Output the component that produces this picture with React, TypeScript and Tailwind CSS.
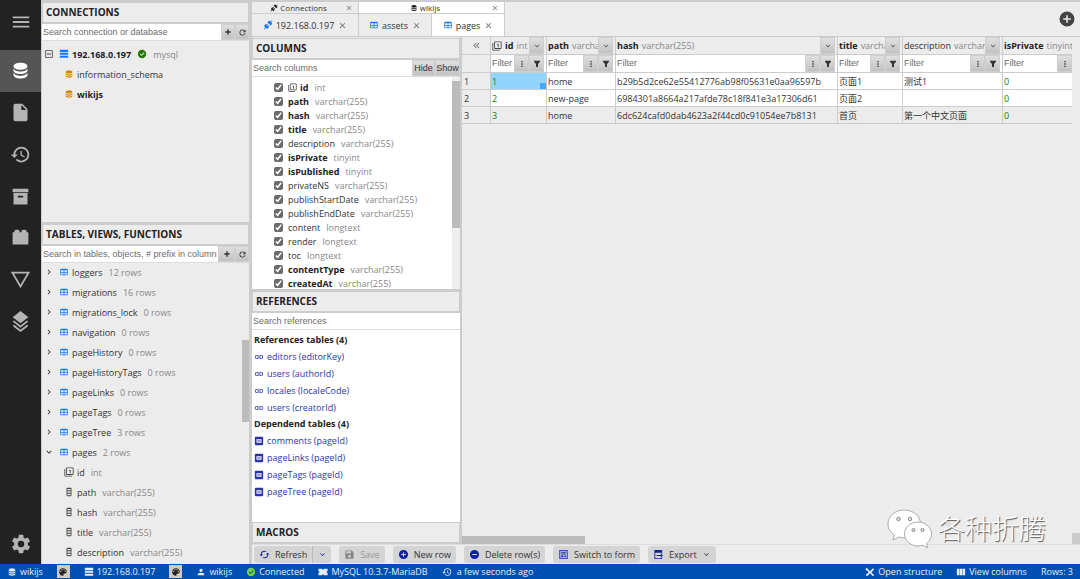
import { useState } from "react";
import type { ReactNode } from "react";
import { clsx } from "clsx";

const icons = {
  menu: "M3,6H21V8H3V6M3,11H21V13H3V11M3,16H21V18H3V16Z",
  database:
    "M12,3C7.58,3 4,4.79 4,7C4,9.21 7.58,11 12,11C16.42,11 20,9.21 20,7C20,4.79 16.42,3 12,3M4,9V12C4,14.21 7.58,16 12,16C16.42,16 20,14.21 20,12V9C20,11.21 16.42,13 12,13C7.58,13 4,11.21 4,9M4,14V17C4,19.21 7.58,21 12,21C16.42,21 20,19.21 20,17V14C20,16.21 16.42,18 12,18C7.58,18 4,16.21 4,14Z",
  file: "M13,9V3.5L18.5,9M6,2C4.89,2 4,2.89 4,4V20A2,2 0 0,0 6,22H18A2,2 0 0,0 20,20V8L14,2H6Z",
  history:
    "M13.5,8H12V13L16.28,15.54L17,14.33L13.5,12.25V8M13,3A9,9 0 0,0 4,12H1L4.96,16.03L9,12H6A7,7 0 0,1 13,5A7,7 0 0,1 20,12A7,7 0 0,1 13,19C11.07,19 9.32,18.21 8.06,16.94L6.64,18.36C8.27,20 10.5,21 13,21A9,9 0 0,0 22,12A9,9 0 0,0 13,3",
  archive:
    "M3,3H21V7H3V3M4,8H20V21H4V8M9.5,11A0.5,0.5 0 0,0 9,11.5V13H15V11.5A0.5,0.5 0 0,0 14.5,11H9.5Z",
  plugin:
    "M19,6V5A2,2 0 0,0 17,3H15A2,2 0 0,0 13,5V6H11V5A2,2 0 0,0 9,3H7A2,2 0 0,0 5,5V6H3V20H21V6H19Z",
  triangle: "M1,3H23L12,22M12,18L19.53,5H4.47",
  layers:
    "M12 0L3 7L4.63 8.27L12 14L19.36 8.27L21 7L12 0M19.37 10.73L12 16.47L4.62 10.74L3 12L12 19L21 12L19.37 10.73M19.37 15.73L12 21.47L4.62 15.74L3 17L12 24L21 17L19.37 15.73Z",
  cog: "M12,15.5A3.5,3.5 0 0,1 8.5,12A3.5,3.5 0 0,1 12,8.5A3.5,3.5 0 0,1 15.5,12A3.5,3.5 0 0,1 12,15.5M19.43,12.97C19.47,12.65 19.5,12.33 19.5,12C19.5,11.67 19.47,11.34 19.43,11L21.54,9.37C21.73,9.22 21.78,8.95 21.66,8.73L19.66,5.27C19.54,5.05 19.27,4.96 19.05,5.05L16.56,6.05C16.04,5.66 15.5,5.32 14.87,5.07L14.5,2.42C14.46,2.18 14.25,2 14,2H10C9.75,2 9.54,2.18 9.5,2.42L9.13,5.07C8.5,5.32 7.96,5.66 7.44,6.05L4.95,5.05C4.73,4.96 4.46,5.05 4.34,5.27L2.34,8.73C2.21,8.95 2.27,9.22 2.46,9.37L4.57,11C4.53,11.34 4.5,11.67 4.5,12C4.5,12.33 4.53,12.65 4.57,12.97L2.46,14.63C2.27,14.78 2.21,15.05 2.34,15.27L4.34,18.73C4.46,18.95 4.73,19.03 4.95,18.95L7.44,17.94C7.96,18.34 8.5,18.68 9.13,18.93L9.5,21.58C9.54,21.82 9.75,22 10,22H14C14.25,22 14.46,21.82 14.5,21.58L14.87,18.93C15.5,18.67 16.04,18.34 16.56,17.94L19.05,18.95C19.27,19.03 19.54,18.95 19.66,18.73L21.66,15.27C21.78,15.05 21.73,14.78 21.54,14.63L19.43,12.97Z",
  plusCircle:
    "M17,13H13V17H11V13H7V11H11V7H13V11H17M12,2A10,10 0 0,0 2,12A10,10 0 0,0 12,22A10,10 0 0,0 22,12A10,10 0 0,0 12,2Z",
  minusCircle:
    "M17,13H7V11H17M12,2A10,10 0 0,0 2,12A10,10 0 0,0 12,22A10,10 0 0,0 22,12A10,10 0 0,0 12,2Z",
  checkCircle:
    "M12,2A10,10 0 0,1 22,12A10,10 0 0,1 12,22A10,10 0 0,1 2,12A10,10 0 0,1 12,2M11,16.5L18,9.5L16.59,8.09L11,13.67L7.91,10.59L6.5,12L11,16.5Z",
  table:
    "M5,4H19A2,2 0 0,1 21,6V18A2,2 0 0,1 19,20H5A2,2 0 0,1 3,18V6A2,2 0 0,1 5,4M5,8V12H11V8H5M13,8V12H19V8H13M5,14V18H11V14H5M13,14V18H19V14H13Z",
  chevronRight:
    "M8.59,16.58L13.17,12L8.59,7.41L10,6L16,12L10,18L8.59,16.58Z",
  chevronDown: "M7.41,8.58L12,13.17L16.59,8.58L18,10L12,16L6,10L7.41,8.58Z",
  chevronsLeft:
    "M18.41,7.41L17,6L11,12L17,18L18.41,16.59L13.83,12L18.41,7.41M12.41,7.41L11,6L5,12L11,18L12.41,16.59L7.83,12L12.41,7.41Z",
  primaryKey:
    "M14,15H16V7H12V9H14M21,17H7V3H21M21,1H7A2,2 0 0,0 5,3V17A2,2 0 0,0 7,19H21A2,2 0 0,0 23,17V3A2,2 0 0,0 21,1M3,5H1V21A2,2 0 0,0 3,23H19V21H3V5Z",
  column:
    "M8,2H16A2,2 0 0,1 18,4V20A2,2 0 0,1 16,22H8A2,2 0 0,1 6,20V4A2,2 0 0,1 8,2M8,5V8H16V5H8M8,10V14H16V10H8M8,16V20H16V16H8Z",
  server: "M2,2H22V7H2V2M2,9H22V14H2V9M2,16H22V21H2V16Z",
  link: "M3.9,12C3.9,10.29 5.29,8.9 7,8.9H11V7H7A5,5 0 0,0 2,12A5,5 0 0,0 7,17H11V15.1H7C5.29,15.1 3.9,13.71 3.9,12M8,13H16V11H8V13M17,7H13V8.9H17C18.71,8.9 20.1,10.29 20.1,12C20.1,13.71 18.71,15.1 17,15.1H13V17H17A5,5 0 0,0 22,12A5,5 0 0,0 17,7Z",
  linkBox:
    "M4,2H20A2,2 0 0,1 22,4V20A2,2 0 0,1 20,22H4A2,2 0 0,1 2,20V4A2,2 0 0,1 4,2M6,8V16H18V8H6M8,11H16V13H8V11Z",
  account:
    "M12,4A4,4 0 0,1 16,8A4,4 0 0,1 12,12A4,4 0 0,1 8,8A4,4 0 0,1 12,4M12,14C16.42,14 20,15.79 20,18V20H4V18C4,15.79 7.58,14 12,14Z",
  palette:
    "M17.5,12A1.5,1.5 0 0,1 16,10.5A1.5,1.5 0 0,1 17.5,9A1.5,1.5 0 0,1 19,10.5A1.5,1.5 0 0,1 17.5,12M14.5,8A1.5,1.5 0 0,1 13,6.5A1.5,1.5 0 0,1 14.5,5A1.5,1.5 0 0,1 16,6.5A1.5,1.5 0 0,1 14.5,8M9.5,8A1.5,1.5 0 0,1 8,6.5A1.5,1.5 0 0,1 9.5,5A1.5,1.5 0 0,1 11,6.5A1.5,1.5 0 0,1 9.5,8M6.5,12A1.5,1.5 0 0,1 5,10.5A1.5,1.5 0 0,1 6.5,9A1.5,1.5 0 0,1 8,10.5A1.5,1.5 0 0,1 6.5,12M12,3A9,9 0 0,0 3,12A9,9 0 0,0 12,21A1.5,1.5 0 0,0 13.5,19.5C13.5,19.11 13.35,18.76 13.11,18.5C12.88,18.23 12.73,17.88 12.73,17.5A1.5,1.5 0 0,1 14.23,16H16A5,5 0 0,0 21,11C21,6.58 16.97,3 12,3Z",
  filter: "M3,2H21V5L15,12V22L9,20V12L3,5V2Z",
  dots: "M10,3H14V7H10V3M10,10H14V14H10V10M10,17H14V21H10V17Z",
  close:
    "M19,6.41L17.59,5L12,10.59L6.41,5L5,6.41L10.59,12L5,17.59L6.41,19L12,13.41L17.59,19L19,17.59L13.41,12L19,6.41Z",
  collapse:
    "M19,19V5H5V19H19M19,3A2,2 0 0,1 21,5V19A2,2 0 0,1 19,21H5A2,2 0 0,1 3,19V5C3,3.89 3.9,3 5,3H19M17,11V13H7V11H17Z",
  refresh:
    "M17.65,6.35C16.2,4.9 14.21,4 12,4A8,8 0 0,0 4,12A8,8 0 0,0 12,20C15.73,20 18.84,17.45 19.73,14H17.65C16.83,16.33 14.61,18 12,18A6,6 0 0,1 6,12A6,6 0 0,1 12,6C13.66,6 15.14,6.69 16.22,7.78L13,11H20V4L17.65,6.35Z",
  sync: "M19,8L15,12H18A6,6 0 0,1 12,18C11,18 10.03,17.75 9.2,17.3L7.74,18.76C8.97,19.54 10.43,20 12,20A8,8 0 0,0 20,12H23M6,12A6,6 0 0,1 12,6C13,6 13.97,6.25 14.8,6.7L16.26,5.24C15.03,4.46 13.57,4 12,4A8,8 0 0,0 4,12H1L5,16L9,12",
  plus: "M20 14H14V20H10V14H4V10H10V4H14V10H20V14Z",
  connection:
    "M21.4 7.5C22.2 8.3 22.2 9.6 21.4 10.3L18.6 13.1L10.8 5.3L13.6 2.5C14.4 1.7 15.7 1.7 16.4 2.5L18.2 4.3L21.2 1.3L22.6 2.7L19.6 5.7L21.4 7.5M15.6 13.3L14.2 11.9L11.4 14.7L9.3 12.6L12.1 9.8L10.7 8.4L7.9 11.2L6.4 9.8L3.6 12.6C2.8 13.4 2.8 14.7 3.6 15.4L5.4 17.2L1.4 21.2L2.8 22.6L6.8 18.6L8.6 20.4C9.4 21.2 10.7 21.2 11.4 20.4L14.2 17.6L12.8 16.2L15.6 13.3Z",
  save: "M15,9H5V5H15M12,19A3,3 0 0,1 9,16A3,3 0 0,1 12,13A3,3 0 0,1 15,16A3,3 0 0,1 12,19M17,3H5C3.89,3 3,3.9 3,5V19A2,2 0 0,0 5,21H19A2,2 0 0,0 21,19V7L17,3Z",
  form: "M3,2H21V22H3V2M5,4V20H19V4H5M7,6H17V8H7V6M7,10H17V12H7V10M7,14H12V18H7V14M14,14H17V18H14V14Z",
  export:
    "M3,2H20V10H18V8H5V20H18V18H20V22H3V2M8,13H17V10L22,14L17,18V15H8V13Z",
  engine: "M1,4H10V6H14V4H23V10H21V14H23V20H14V18H10V20H1V14H3V10H1V4Z",
  tools:
    "M4,2L12,10L19,3L22,6L15,13L22,19L19,22L12,15L5,22L2,19L9,12L6,9L2,8V4L4,2Z",
  columns: "M2,4H8V20H2V4M9,4H15V20H9V4M16,4H22V20H16V4Z",
};

type IconName = keyof typeof icons;

const evenOddIcons: IconName[] = ["form", "linkBox", "column"];

function Icon({ name, className }: { name: IconName; className: string }) {
  return (
    <svg
      viewBox="0 0 24 24"
      fill="currentColor"
      fillRule={evenOddIcons.includes(name) ? "evenodd" : undefined}
      className={clsx("shrink-0", className)}
      aria-hidden="true"
    >
      <path d={icons[name]} />
    </svg>
  );
}

const toolButton =
  "flex shrink-0 items-center justify-center border border-[#cfcfcf] bg-linear-to-b from-[#e0e0e0] to-[#c2c2c2] text-[#333]";
const inputFont = "font-['Liberation_Sans',Arial,sans-serif] text-[9px]";
const inputClass = "min-w-0 flex-1 bg-white px-px text-[#222] outline-none placeholder:text-[#6c6c6c]";

const railItems: { icon: IconName; label: string }[] = [
  { icon: "database", label: "Database" },
  { icon: "file", label: "Files" },
  { icon: "history", label: "History" },
  { icon: "archive", label: "Archive" },
  { icon: "plugin", label: "Plugins" },
  { icon: "triangle", label: "Cell data" },
  { icon: "layers", label: "App layers" },
];

const tables = [
  { name: "loggers", rows: 12 },
  { name: "migrations", rows: 16 },
  { name: "migrations_lock", rows: 0 },
  { name: "navigation", rows: 0 },
  { name: "pageHistory", rows: 0 },
  { name: "pageHistoryTags", rows: 0 },
  { name: "pageLinks", rows: 0 },
  { name: "pageTags", rows: 0 },
  { name: "pageTree", rows: 3 },
  { name: "pages", rows: 2, open: true },
];

const columns = [
  { name: "id", type: "int", required: true, key: true },
  { name: "path", type: "varchar(255)", required: true },
  { name: "hash", type: "varchar(255)", required: true },
  { name: "title", type: "varchar(255)", required: true },
  { name: "description", type: "varchar(255)" },
  { name: "isPrivate", type: "tinyint", required: true },
  { name: "isPublished", type: "tinyint", required: true },
  { name: "privateNS", type: "varchar(255)" },
  { name: "publishStartDate", type: "varchar(255)" },
  { name: "publishEndDate", type: "varchar(255)" },
  { name: "content", type: "longtext" },
  { name: "render", type: "longtext" },
  { name: "toc", type: "longtext" },
  { name: "contentType", type: "varchar(255)", required: true },
  { name: "createdAt", type: "varchar(255)", required: true },
];

const references = ["editors (editorKey)", "users (authorId)", "locales (localeCode)", "users (creatorId)"];
const dependencies = ["comments (pageId)", "pageLinks (pageId)", "pageTags (pageId)", "pageTree (pageId)"];

const gridColumns = columns.slice(0, 6);
const gridRows = [
  ["1", "home", "b29b5d2ce62e55412776ab98f05631e0aa96597b", "页面1", "测试1", "0"],
  ["2", "new-page", "6984301a8664a217afde78c18f841e3a17306d61", "页面2", "", "0"],
  ["3", "home", "6dc624cafd0dab4623a2f44cd0c91054ee7b8131", "首页", "第一个中文页面", "0"],
];

function PanelTitle({ children }: { children: ReactNode }) {
  return (
    <h2 className="h-[22px] shrink-0 border border-b-2 border-[#ccc] bg-[#ececec] px-[3px] text-[10px]/[19px] font-bold text-[#222]">
      {children}
    </h2>
  );
}

function SearchRow({ label, children }: { label: string; children?: ReactNode }) {
  return (
    <div className={clsx("flex h-[17px] shrink-0 border-b border-[#ddd] bg-white", inputFont)}>
      <input type="text" aria-label={label} placeholder={label} className={inputClass} />
      {children}
    </div>
  );
}

function AddAndRefresh({ className }: { className: string }) {
  return (
    <>
      <button type="button" aria-label="Add" className={clsx(toolButton, className)}>
        <Icon name="plus" className="size-[8px]" />
      </button>
      <button type="button" aria-label="Refresh" className={clsx(toolButton, "w-[14px]")}>
        <Icon name="refresh" className="size-[9px]" />
      </button>
    </>
  );
}

function ActivityRail() {
  const [active, setActive] = useState("database");

  return (
    <nav className="flex w-[41px] shrink-0 flex-col bg-[#222] text-[#b4b4b4]">
      <button type="button" aria-label="Menu" className="flex h-[50px] justify-center pt-[11px]">
        <Icon name="menu" className="size-[22px]" />
      </button>
      <div className="flex h-[292px] flex-col">
        {railItems.map((item) => (
          <button
            key={item.icon}
            type="button"
            aria-label={item.label}
            onClick={() => setActive(item.icon)}
            className={clsx(
              "flex flex-1 items-center justify-center",
              active === item.icon && "bg-[#555] text-white",
            )}
          >
            <Icon name={item.icon} className="size-[21px]" />
          </button>
        ))}
      </div>
      <button type="button" aria-label="Settings" className="mt-auto flex h-10 items-center justify-center">
        <Icon name="cog" className="size-[22px]" />
      </button>
    </nav>
  );
}

function ConnectionsPanel() {
  return (
    <section className="flex h-[222px] shrink-0 flex-col border-b-2 border-[#ccc]">
      <PanelTitle>CONNECTIONS</PanelTitle>
      <SearchRow label="Search connection or database">
        <AddAndRefresh className="w-[14px]" />
      </SearchRow>
      <ul className="pt-[3px]">
        <li className="flex h-5 items-center pl-[2px]">
          <Icon name="collapse" className="mr-[5px] size-[10px] text-[#444]" />
          <Icon name="server" className="mr-[3px] size-[10px] text-[#1677ff]" />
          <span className="font-bold text-[#222]">192.168.0.197</span>
          <Icon name="checkCircle" className="mx-[6px] size-[10px] text-[#237804]" />
          <span className="text-[#888]">mysql</span>
        </li>
        <li className="flex h-5 items-center gap-[3px] pl-[22px]">
          <Icon name="database" className="size-[10px] text-[#d48806]" />
          information_schema
        </li>
        <li className="flex h-5 items-center gap-[3px] pl-[22px] font-bold text-[#222]">
          <Icon name="database" className="size-[10px] text-[#d48806]" />
          wikijs
        </li>
      </ul>
    </section>
  );
}

function TablesPanel() {
  return (
    <section className="flex min-h-0 flex-1 flex-col">
      <PanelTitle>TABLES, VIEWS, FUNCTIONS</PanelTitle>
      <SearchRow label="Search in tables, objects, # prefix in columns">
        <AddAndRefresh className="w-[17px]" />
      </SearchRow>
      <div className="flex min-h-0 flex-1">
        <ul className="-mt-px min-w-0 flex-1 overflow-hidden">
          {tables.map((table) => (
            <li key={table.name} className="flex h-5 items-center pl-[2px]">
              <Icon name={table.open ? "chevronDown" : "chevronRight"} className="mr-[5px] size-[10px]" />
              <Icon name="table" className="mr-[3px] size-[10px] text-[#1677ff]" />
              <span>{table.name}</span>
              <span className="ml-[6px] text-[#888]">{table.rows} rows</span>
            </li>
          ))}
          {columns.slice(0, 5).map((column) => (
            <li key={column.name} className="flex h-5 items-center pl-[22px]">
              <Icon name={column.key ? "primaryKey" : "column"} className="mr-[3px] size-[10px] text-[#444]" />
              <span>{column.name}</span>
              <span className="ml-[6px] text-[#888]">{column.type}</span>
            </li>
          ))}
        </ul>
        <div className="w-[7px] pt-[77px]">
          <div className="h-[82px] bg-[#bbb]" />
        </div>
      </div>
    </section>
  );
}

interface TabProps {
  icon: IconName;
  label: string;
  active?: boolean;
}

function Tab({ icon, label, active }: TabProps) {
  return (
    <div
      className={clsx(
        "flex flex-1 items-center justify-center border-r border-[#ccc]",
        active ? "bg-white" : "bg-[#ececec]",
      )}
    >
      <button type="button" className="flex items-center gap-[3px]">
        <Icon name={icon} className="size-[10px] text-[#1677ff]" />
        {label}
      </button>
      <button type="button" aria-label={`Close ${label}`} className="ml-1">
        <Icon name="close" className="size-[9px] text-[#666]" />
      </button>
    </div>
  );
}

function GroupTab({ icon, label, active }: TabProps) {
  return (
    <div
      className={clsx(
        "flex h-3 items-center border-r border-b border-[#ccc] pr-[5px] text-[8px]/[11px]",
        active ? "bg-white" : "bg-[#ececec]",
      )}
    >
      <span className="flex flex-1 items-center justify-center gap-[2px]">
        <Icon name={icon} className="size-[8px] text-[#222]" />
        {label}
      </span>
      <button type="button" aria-label={`Close ${label}`}>
        <Icon name="close" className="size-[8px] text-[#777]" />
      </button>
    </div>
  );
}

function TabBar() {
  return (
    <header className="flex h-[35px] shrink-0 items-center justify-between border-b border-[#ccc] pr-[4px]">
      <div className="flex h-full">
        <div className="flex w-[107px] flex-col">
          <GroupTab icon="connection" label="Connections" />
          <div className="flex flex-1">
            <Tab icon="connection" label="192.168.0.197" />
          </div>
        </div>
        <div className="flex w-[146px] flex-col">
          <GroupTab icon="database" label="wikijs" active />
          <div className="flex flex-1">
            <Tab icon="table" label="assets" />
            <Tab icon="table" label="pages" active />
          </div>
        </div>
      </div>
      <button type="button" aria-label="New tab">
        <Icon name="plusCircle" className="size-[18px] text-[#444]" />
      </button>
    </header>
  );
}

function ColumnsPanel() {
  return (
    <section className="flex h-[253px] shrink-0 flex-col border-b-2 border-[#ccc]">
      <PanelTitle>COLUMNS</PanelTitle>
      <SearchRow label="Search columns">
        <button type="button" className={clsx(toolButton, "w-[23px]")}>
          Hide
        </button>
        <button type="button" className={clsx(toolButton, "w-[25px]")}>
          Show
        </button>
      </SearchRow>
      <div className="flex min-h-0 flex-1 bg-white">
        <ul className="min-w-0 flex-1 overflow-hidden pt-[3px] pl-[22px]">
          {columns.map((column) => (
            <li key={column.name}>
              <label className="flex h-[14px] items-center">
                <input type="checkbox" defaultChecked className="mr-[5px] size-[9px] accent-[#6b6b6b]" />
                {column.key && <Icon name="primaryKey" className="mr-[3px] size-[9px] text-[#444]" />}
                <span className={clsx(column.required && "font-bold text-[#222]")}>{column.name}</span>
                <span className="ml-[6px] text-[#888]">{column.type}</span>
              </label>
            </li>
          ))}
        </ul>
        <div className="w-[8px] bg-[#eee] pt-1">
          <div className="h-[147px] bg-[#bbb]" />
        </div>
      </div>
    </section>
  );
}

function LinkList({ title, icon, items }: { title: string; icon: IconName; items: string[] }) {
  return (
    <>
      <h3 className="leading-[16px] font-bold text-[#222]">{title}</h3>
      <ul>
        {items.map((item) => (
          <li key={item} className="h-[17px]">
            <a href="#table" className="flex h-full items-center gap-[3px] text-[#2a36a8]">
              <Icon name={icon} className="size-[10px]" />
              {item}
            </a>
          </li>
        ))}
      </ul>
    </>
  );
}

function ReferencesPanel() {
  return (
    <section className="flex min-h-0 flex-1 flex-col">
      <PanelTitle>REFERENCES</PanelTitle>
      <SearchRow label="Search references" />
      <div className="min-h-0 flex-1 overflow-hidden bg-white pt-[2px] pl-[2px]">
        <LinkList title="References tables (4)" icon="link" items={references} />
        <LinkList title="Dependend tables (4)" icon="linkBox" items={dependencies} />
      </div>
    </section>
  );
}

function DataGrid() {
  const cell = "border-r border-b border-[#ccc] p-0";

  return (
    <div className="flex min-w-0 flex-1">
      <div className="flex min-w-0 flex-1 flex-col justify-between overflow-hidden">
        <table className="w-[628px] table-fixed border-separate border-spacing-0 text-left">
          <colgroup>
            <col className="w-[29px]" />
            <col className="w-[56px]" />
            <col className="w-[69px]" />
            <col className="w-[222px]" />
            <col className="w-[65px]" />
            <col className="w-[100px]" />
            <col className="w-[87px]" />
          </colgroup>
          <thead>
            <tr className="h-[18px]">
              <th className={cell}>
                <button type="button" aria-label="Collapse columns" className="flex w-full justify-center">
                  <Icon name="chevronsLeft" className="size-[11px] text-[#777]" />
                </button>
              </th>
              {gridColumns.map((column) => (
                <th key={column.name} className={clsx(cell, "font-normal")}>
                  <div className="flex h-[17px] items-center pr-[2px]">
                    <div className="flex min-w-0 flex-1 items-center overflow-hidden pl-px whitespace-nowrap">
                      {column.key && <Icon name="primaryKey" className="mr-[3px] size-[10px] text-[#444]" />}
                      <span className={clsx(column.required && "font-bold text-[#222]")}>{column.name}</span>
                      <span className="ml-[3px] text-[#888]">{column.type}</span>
                    </div>
                    <button
                      type="button"
                      aria-label={`${column.name} menu`}
                      className={clsx(toolButton, "h-full w-[15px]")}
                    >
                      <Icon name="chevronDown" className="size-[8px]" />
                    </button>
                  </div>
                </th>
              ))}
            </tr>
            <tr className="h-[18px]">
              <th className={cell} />
              {gridColumns.map((column) => (
                <th key={column.name} className={cell}>
                  <div className={clsx("flex h-[17px] bg-white pr-[2px] font-normal", inputFont)}>
                    <input
                      type="text"
                      aria-label={`Filter ${column.name}`}
                      placeholder="Filter"
                      className={inputClass}
                    />
                    <button
                      type="button"
                      aria-label={`${column.name} filter options`}
                      className={clsx(toolButton, "w-[15px]")}
                    >
                      <Icon name="dots" className="size-[8px]" />
                    </button>
                    <button
                      type="button"
                      aria-label={`Apply ${column.name} filter`}
                      className={clsx(toolButton, "w-[15px]")}
                    >
                      <Icon name="filter" className="size-[8px]" />
                    </button>
                  </div>
                </th>
              ))}
            </tr>
          </thead>
          <tbody>
            {gridRows.map((row, rowIndex) => (
              <tr key={row[0]} className={clsx("h-[17px]", rowIndex < 2 && "bg-white")}>
                <th className={clsx(cell, "bg-[#ececec] pl-[2px] font-normal")}>{rowIndex + 1}</th>
                {row.map((value, index) => (
                  <td
                    key={gridColumns[index].name}
                    className={clsx(
                      cell,
                      "overflow-hidden pl-px whitespace-nowrap",
                      (index === 0 || index === 5) && "text-[#237804]",
                      rowIndex === 0 && index === 0 && "relative bg-[#91d5ff]",
                    )}
                  >
                    {value}
                    {rowIndex === 0 && index === 0 && (
                      <span className="absolute right-0 bottom-0 size-[6px] bg-[#40a9ff]" />
                    )}
                  </td>
                ))}
              </tr>
            ))}
          </tbody>
        </table>
        <div className="h-[8px] w-[123px] bg-[#bbb]" />
      </div>
      <div className="flex w-[8px] flex-col justify-end">
        <div className="h-[11px] bg-[#ccc]" />
      </div>
    </div>
  );
}

interface ToolbarButtonProps {
  icon: IconName;
  children: ReactNode;
  disabled?: boolean;
}

function ToolbarButton({ icon, children, disabled }: ToolbarButtonProps) {
  return (
    <button
      type="button"
      disabled={disabled}
      className={clsx(
        "flex h-[17px] items-center gap-[5px] rounded-[3px] bg-[#d4d4d4] px-[5px]",
        disabled && "text-[#999]",
      )}
    >
      <Icon name={icon} className={clsx("size-[11px]", disabled ? "text-[#888]" : "text-[#10239e]")} />
      {children}
    </button>
  );
}

function Toolbar() {
  return (
    <div className="flex h-5 shrink-0 items-center gap-[8px] border-t border-[#ddd] pl-[2px]">
      <div className="flex">
        <ToolbarButton icon="sync">Refresh</ToolbarButton>
        <button
          type="button"
          aria-label="Refresh options"
          className="flex h-[17px] w-[19px] items-center justify-center rounded-r-[3px] border-l border-[#bbb] bg-[#d4d4d4]"
        >
          <Icon name="chevronDown" className="size-[9px] text-[#10239e]" />
        </button>
      </div>
      <ToolbarButton icon="save" disabled>
        Save
      </ToolbarButton>
      <ToolbarButton icon="plusCircle">New row</ToolbarButton>
      <ToolbarButton icon="minusCircle">Delete row(s)</ToolbarButton>
      <ToolbarButton icon="form">Switch to form</ToolbarButton>
      <ToolbarButton icon="export">
        Export
        <Icon name="chevronDown" className="size-[9px]" />
      </ToolbarButton>
    </div>
  );
}

function StatusItem({ icon, children, className }: { icon?: IconName; children: ReactNode; className?: string }) {
  return (
    <span className="flex items-center gap-[3px]">
      {icon && <Icon name={icon} className={clsx("size-[10px]", className)} />}
      {children}
    </span>
  );
}

function ColorButton({ label }: { label: string }) {
  return (
    <button type="button" aria-label={label} className="flex size-[13px] items-center justify-center bg-[#ccc] text-[#222]">
      <Icon name="palette" className="size-[10px]" />
    </button>
  );
}

function StatusBar() {
  return (
    <footer className="flex h-[15px] shrink-0 items-center justify-between bg-[#0050b3] px-[7px] text-[#e8eef8]">
      <div className="flex items-center gap-[14px]">
        <StatusItem icon="database">wikijs</StatusItem>
        <ColorButton label="Database color" />
        <StatusItem icon="server">192.168.0.197</StatusItem>
        <ColorButton label="Server color" />
        <StatusItem icon="account">wikijs</StatusItem>
        <StatusItem icon="checkCircle" className="text-[#73d13d]">
          Connected
        </StatusItem>
        <StatusItem icon="engine">MySQL 10.3.7-MariaDB</StatusItem>
        <StatusItem icon="history" className="mr-[2px]">
          a few seconds ago
        </StatusItem>
      </div>
      <div className="flex items-center gap-[14px]">
        <StatusItem icon="tools">Open structure</StatusItem>
        <StatusItem icon="columns">View columns</StatusItem>
        <StatusItem>Rows: 3</StatusItem>
      </div>
    </footer>
  );
}

function Watermark() {
  return (
    <div className="pointer-events-none absolute right-[34px] bottom-[30px] flex items-center gap-[6px]">
      <svg viewBox="0 0 45 40" className="h-10 w-[45px]" aria-hidden="true">
        <g fill="#fff" stroke="#999" strokeWidth="0.8">
          <path d="M17 1C8 1 1 7 1 15c0 5 2.500 8.500 6.500 11L6 31l6-3c2 .6 3.500.8 5.500.8 9 0 16-6 16-14S26 1 17 1Z" />
          <path d="M31 13c-7.500 0-13.500 5.400-13.500 12S23.500 37 31 37c1.700 0 3.300-.3 4.800-.8l5 2.600-1.300-4.300c3-2.300 5-5.500 5-9.500 0-6.600-6-12-13.500-12Z" />
        </g>
        <g fill="#ececec" stroke="#777" strokeWidth="0.900">
          <circle cx="11.500" cy="10" r="1.700" />
          <circle cx="23" cy="10" r="1.700" />
          <circle cx="26.500" cy="21" r="1.500" />
          <circle cx="35.500" cy="21" r="1.500" />
        </g>
      </svg>
      <span className="text-[27px]/[36px] font-light text-white [text-shadow:1px_1px_1px_#555]">各种折腾</span>
    </div>
  );
}

export default function App() {
  return (
    <div className="relative flex h-screen flex-col overflow-hidden bg-[#ececec] font-['Open_Sans','Noto_Sans_CJK_SC',sans-serif] text-[9px]/[13px] text-[#333]">
      <div className="flex min-h-0 flex-1">
        <ActivityRail />
        <aside className="flex w-[211px] shrink-0 flex-col border-t-2 border-r-3 border-l border-[#ccc]">
          <ConnectionsPanel />
          <TablesPanel />
        </aside>
        <main className="flex min-w-0 flex-1 flex-col border-t-2 border-[#ccc]">
          <TabBar />
          <div className="flex min-h-0 flex-1">
            <div className="flex w-[210px] shrink-0 flex-col border-r-2 border-[#ccc] pt-px">
              <ColumnsPanel />
              <ReferencesPanel />
              <PanelTitle>MACROS</PanelTitle>
            </div>
            <DataGrid />
          </div>
          <Toolbar />
        </main>
      </div>
      <StatusBar />
      <Watermark />
    </div>
  );
}
